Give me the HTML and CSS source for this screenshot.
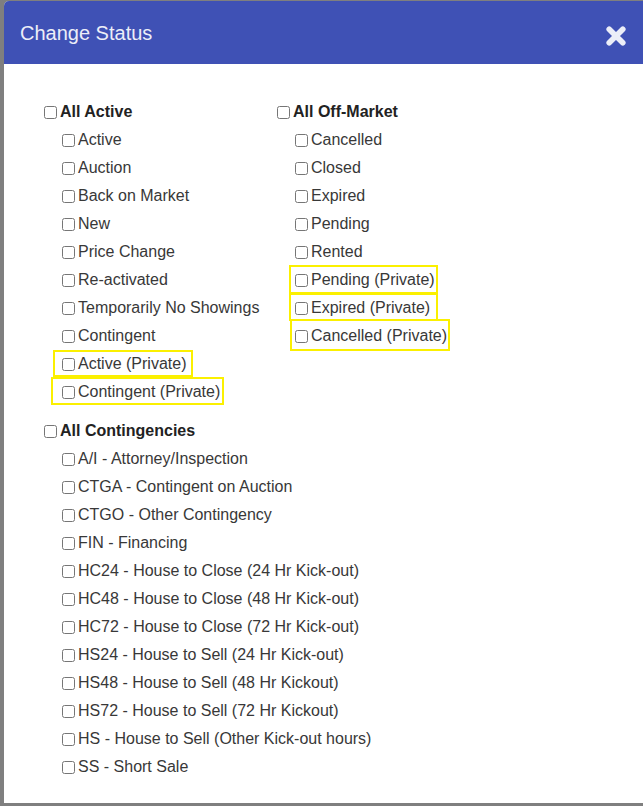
FILE: index.html
```html
<!DOCTYPE html>
<html>

<head>
  <meta charset="utf-8">
  <meta name="viewport" content="width=device-width, initial-scale=1.0">
  <title>Change Status</title>
  <link rel="stylesheet" href="styles.css">
</head>

<body>
  <div class="modal">
    <div class="modalHeader">
      <h2 class="modalTitle">Change Status</h2>
      <button class="close" aria-label="Close">
        <svg width="20" height="20" viewBox="0 0 20 20">
          <path d="M3.2 3.2 L16.8 16.8 M16.8 3.2 L3.2 16.8" stroke="currentColor" stroke-width="5.6" stroke-linecap="round" fill="none" />
        </svg>
      </button>
    </div>
    <div class="modalBody">
      <div class="columns">
        <div class="group">
          <label class="check head"><input type="checkbox">All Active</label>
          <div class="sub">
            <label class="check"><input type="checkbox">Active</label>
            <label class="check"><input type="checkbox">Auction</label>
            <label class="check"><input type="checkbox">Back on Market</label>
            <label class="check"><input type="checkbox">New</label>
            <label class="check"><input type="checkbox">Price Change</label>
            <label class="check"><input type="checkbox">Re-activated</label>
            <label class="check"><input type="checkbox">Temporarily No Showings</label>
            <label class="check"><input type="checkbox">Contingent</label>
            <label class="check"><input type="checkbox">Active (Private)</label>
            <label class="check"><input type="checkbox">Contingent (Private)</label>
          </div>
        </div>
        <div class="group">
          <label class="check head"><input type="checkbox">All Off-Market</label>
          <div class="sub">
            <label class="check"><input type="checkbox">Cancelled</label>
            <label class="check"><input type="checkbox">Closed</label>
            <label class="check"><input type="checkbox">Expired</label>
            <label class="check"><input type="checkbox">Pending</label>
            <label class="check"><input type="checkbox">Rented</label>
            <label class="check"><input type="checkbox">Pending (Private)</label>
            <label class="check"><input type="checkbox">Expired (Private)</label>
            <label class="check"><input type="checkbox">Cancelled (Private)</label>
          </div>
        </div>
      </div>
      <div class="group contingencies">
        <label class="check head"><input type="checkbox">All Contingencies</label>
        <div class="sub">
          <label class="check"><input type="checkbox">A/I - Attorney/Inspection</label>
          <label class="check"><input type="checkbox">CTGA - Contingent on Auction</label>
          <label class="check"><input type="checkbox">CTGO - Other Contingency</label>
          <label class="check"><input type="checkbox">FIN - Financing</label>
          <label class="check"><input type="checkbox">HC24 - House to Close (24 Hr Kick-out)</label>
          <label class="check"><input type="checkbox">HC48 - House to Close (48 Hr Kick-out)</label>
          <label class="check"><input type="checkbox">HC72 - House to Close (72 Hr Kick-out)</label>
          <label class="check"><input type="checkbox">HS24 - House to Sell (24 Hr Kick-out)</label>
          <label class="check"><input type="checkbox">HS48 - House to Sell (48 Hr Kickout)</label>
          <label class="check"><input type="checkbox">HS72 - House to Sell (72 Hr Kickout)</label>
          <label class="check"><input type="checkbox">HS - House to Sell (Other Kick-out hours)</label>
          <label class="check"><input type="checkbox">SS - Short Sale</label>
        </div>
      </div>

      <!-- zaznaczenia (adnotacje na zrzucie) -->
      <div class="mark markActivePriv"></div>
      <div class="mark markContPriv"></div>
      <div class="mark markPendPriv"></div>
      <div class="mark markExpPriv"></div>
      <div class="mark markCancPriv"></div>
    </div>
  </div>
</body>

</html>
```

FILE: styles.css
```css
html,
body {
  margin: 0;
  height: 100%;
  overflow: hidden;
}

body {
  background-color: #7f7f7f;
  font-family: "Liberation Sans", Arial, sans-serif;
  font-size: 16px;
  color: #383838;
}

.modal {
  margin: 1px 0 0 4px;
  width: 660px;
  height: 802px;
  background-color: #fff;
  border-radius: 5px 5px 0 0;
  overflow: hidden;
}

.modalHeader {
  height: 63px;
  background-color: #3f51b5;
  display: flex;
  align-items: center;
  justify-content: space-between;
  padding: 1px 38px 0 16px;
  box-sizing: border-box;
}

.modalTitle {
  margin: 0;
  font-size: 20px;
  font-weight: normal;
  color: #eceef8;
}

.close {
  all: unset;
  display: flex;
  color: #eceef8;
  cursor: pointer;
  margin-top: 6px;
}

.modalBody {
  position: relative;
  padding: 34px 0 0 36px;
}

.columns {
  display: grid;
  grid-template-columns: 233px auto;
}

.check {
  display: flex;
  align-items: center;
  height: 28px;
  white-space: nowrap;
}

.check input {
  margin: 3px 3px 3px 4px;
}

.head {
  font-weight: bold;
  color: #222;
}

.sub {
  padding-left: 18px;
}

.contingencies {
  margin-top: 11px;
}

.mark {
  position: absolute;
  border: 2px solid #fbf000;
  box-sizing: border-box;
}

.markActivePriv {
  left: 49px;
  top: 286px;
  width: 140px;
  height: 27px;
}

.markContPriv {
  left: 47px;
  top: 313px;
  width: 173px;
  height: 28px;
}

.markPendPriv {
  left: 285px;
  top: 201px;
  width: 149px;
  height: 29px;
}

.markExpPriv {
  left: 285px;
  top: 229px;
  width: 149px;
  height: 28px;
}

.markCancPriv {
  left: 286px;
  top: 255px;
  width: 160px;
  height: 32px;
}
```
